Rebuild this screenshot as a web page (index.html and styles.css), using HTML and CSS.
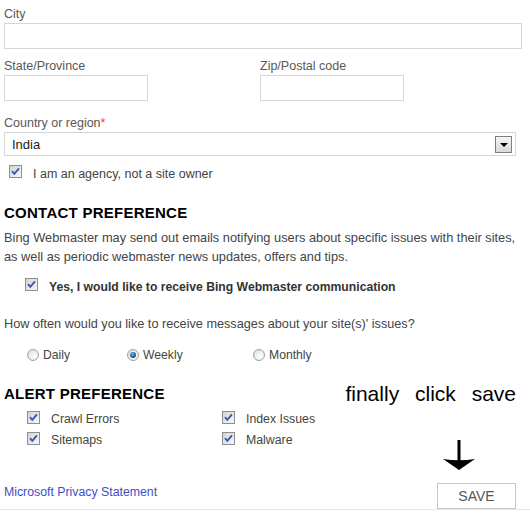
FILE: index.html
```html
<!DOCTYPE html>
<html lang="en">
<head>
<meta charset="utf-8">
<title>Account details</title>
<link rel="stylesheet" href="styles.css">
</head>
<body>
<div class="page">
  <div class="field">
    <label class="lbl">City</label>
    <div class="txt txt-wide"></div>
  </div>

  <div class="row2">
    <div class="field col-state">
      <label class="lbl">State/Province</label>
      <div class="txt txt-short"></div>
    </div>
    <div class="field">
      <label class="lbl">Zip/Postal code</label>
      <div class="txt txt-short"></div>
    </div>
  </div>

  <div class="field country">
    <label class="lbl">Country or region<span class="req">*</span></label>
    <div class="sel">
      <span class="sel-val">India</span>
      <span class="sel-btn"><span class="tri"></span></span>
    </div>
  </div>

  <div class="check-row agency">
    <span class="cb"><svg viewBox="0 0 11 11" width="11" height="11"><path d="M2 5.2 L4.3 7.8 L9 2.4" fill="none" stroke="#3a56b0" stroke-width="1.9"/></svg></span>
    <span class="cb-label">I am an agency, not a site owner</span>
  </div>

  <h2 class="sec-title contact-title">CONTACT PREFERENCE</h2>
  <p class="para">Bing Webmaster may send out emails notifying users about specific issues with their sites, as well as periodic webmaster news updates, offers and tips.</p>

  <div class="check-row optin">
    <span class="cb"><svg viewBox="0 0 11 11" width="11" height="11"><path d="M2 5.2 L4.3 7.8 L9 2.4" fill="none" stroke="#3a56b0" stroke-width="1.9"/></svg></span>
    <span class="cb-label bold">Yes, I would like to receive Bing Webmaster communication</span>
  </div>

  <p class="question">How often would you like to receive messages about your site(s)' issues?</p>

  <div class="radios">
    <div class="radio-opt"><span class="rd"></span><span>Daily</span></div>
    <div class="radio-opt"><span class="rd on"><span class="dot"></span></span><span>Weekly</span></div>
    <div class="radio-opt"><span class="rd"></span><span>Monthly</span></div>
  </div>

  <div class="alert">
    <div class="alert-left">
      <h2 class="sec-title">ALERT PREFERENCE</h2>
      <div class="alert-grid">
        <div class="check-row"><span class="cb"><svg viewBox="0 0 11 11" width="11" height="11"><path d="M2 5.2 L4.3 7.8 L9 2.4" fill="none" stroke="#3a56b0" stroke-width="1.9"/></svg></span><span class="cb-label">Crawl Errors</span></div>
        <div class="check-row"><span class="cb"><svg viewBox="0 0 11 11" width="11" height="11"><path d="M2 5.2 L4.3 7.8 L9 2.4" fill="none" stroke="#3a56b0" stroke-width="1.9"/></svg></span><span class="cb-label">Index Issues</span></div>
        <div class="check-row"><span class="cb"><svg viewBox="0 0 11 11" width="11" height="11"><path d="M2 5.2 L4.3 7.8 L9 2.4" fill="none" stroke="#3a56b0" stroke-width="1.9"/></svg></span><span class="cb-label">Sitemaps</span></div>
        <div class="check-row"><span class="cb"><svg viewBox="0 0 11 11" width="11" height="11"><path d="M2 5.2 L4.3 7.8 L9 2.4" fill="none" stroke="#3a56b0" stroke-width="1.9"/></svg></span><span class="cb-label">Malware</span></div>
      </div>
    </div>
    <div class="alert-right">
      <div class="note">finally click save</div>
      <svg class="arrow" viewBox="0 0 32 30" width="32" height="30">
        <rect x="14.5" y="0" width="3" height="22" fill="#000"/>
        <path d="M0 19 Q16 21.5 32 19 L16 30 Z" fill="#000"/>
      </svg>
    </div>
  </div>

  <div class="footer">
    <a class="privacy" href="#">Microsoft Privacy Statement</a>
    <span class="save">SAVE</span>
  </div>
</div>
<div class="rule"></div>
</body>
</html>
```

FILE: styles.css
```css
* { box-sizing: border-box; }

body {
  margin: 0;
  background: #fff;
  font-family: "Liberation Sans", Arial, sans-serif;
  font-size: 12.5px;
  color: #444;
}

.page {
  width: 530px;
  padding: 6px 0 0 4px;
}

.lbl {
  display: block;
  line-height: 16px;
  color: #585858;
}

.req { color: #e0472f; }

.txt {
  height: 26px;
  margin-top: 1px;
  border: 1px solid #d6d6d6;
  background: #fff;
}

.txt-wide { width: 518px; }
.txt-short { width: 144px; }

.row2 {
  display: flex;
  margin-top: 9px;
}

.col-state { width: 256px; }

.country { margin-top: 14px; }

.sel {
  width: 512px;
  height: 24px;
  margin-top: 1px;
  border: 1px solid #d6d6d6;
  display: flex;
  align-items: center;
  justify-content: space-between;
  padding: 0 3px 0 7px;
}

.sel-val { color: #222; font-size: 13px; }

.sel-btn {
  width: 17px;
  height: 17px;
  border: 1px solid #7f7f7f;
  background: linear-gradient(#f6f6f6, #d9d9d9);
  display: flex;
  align-items: center;
  justify-content: center;
}

.tri {
  width: 0;
  height: 0;
  border-left: 4px solid transparent;
  border-right: 4px solid transparent;
  border-top: 4px solid #000;
  margin-top: 1px;
}

.check-row {
  display: flex;
  align-items: flex-start;
  line-height: 16px;
}

.cb {
  width: 13px;
  height: 13px;
  flex: none;
  border: 1px solid #8e8e8e;
  background: linear-gradient(135deg, #d4d4d4, #f7f7f7);
  display: flex;
  align-items: center;
  justify-content: center;
  margin-top: 0;
}

.cb-label { margin-left: 11px; }

.bold { font-weight: bold; color: #333; font-size: 12.2px; }

.agency {
  margin-top: 10px;
  padding-left: 5px;
}
.agency .cb { margin-top: -1px; }

.sec-title {
  margin: 0;
  font-size: 15px;
  line-height: 18px;
  font-weight: bold;
  color: #000;
  letter-spacing: 0.25px;
}

.contact-title { margin-top: 22px; }

.para {
  margin: 6px 0 0;
  width: 512px;
  line-height: 19px;
  font-size: 12.8px;
}

.optin {
  margin-top: 13px;
  padding-left: 21px;
}
.optin .cb { margin-top: -1px; }

.question {
  margin: 21px 0 0;
  line-height: 16px;
  font-size: 12.7px;
}

.radios {
  margin-top: 15px;
  padding-left: 23px;
  display: grid;
  grid-template-columns: 100px 126px auto;
  line-height: 16px;
  font-size: 12.2px;
}

.radio-opt {
  display: flex;
  align-items: flex-start;
}

.rd {
  width: 12px;
  height: 12px;
  flex: none;
  margin: 2px 4px 0 0;
  border-radius: 50%;
  border: 1px solid #a3a3a3;
  background: radial-gradient(circle at 65% 65%, #ffffff, #d9d9d9);
  display: flex;
  align-items: center;
  justify-content: center;
}

.dot {
  width: 6px;
  height: 6px;
  border-radius: 50%;
  background: radial-gradient(circle at 40% 35%, #6fb6ea, #0d4f8c 70%);
}

.alert {
  margin-top: 22px;
  width: 512px;
  display: flex;
  justify-content: space-between;
}

.alert-grid {
  margin-top: 8px;
  padding-left: 23px;
  display: grid;
  grid-template-columns: 195px auto;
  row-gap: 5px;
  font-size: 12.3px;
}

.alert-right {
  margin-top: -3px;
  display: flex;
  flex-direction: column;
  align-items: flex-end;
}

.note {
  font-size: 21px;
  line-height: 24px;
  color: #000;
  word-spacing: 10px;
}

.arrow {
  display: block;
  margin: 34px 41px 0 0;
}

.footer {
  width: 512px;
  margin-top: 13px;
  display: flex;
  justify-content: space-between;
  align-items: flex-start;
}

.privacy {
  margin-top: 1px;
  line-height: 16px;
  font-size: 12.3px;
  color: #3d4fc6;
  text-decoration: none;
}

.save {
  width: 79px;
  height: 26px;
  border: 1px solid #c8c8c8;
  display: flex;
  align-items: center;
  justify-content: center;
  color: #555;
  font-size: 14px;
}

.rule {
  height: 1px;
  background: #e6e6e6;
}
```
